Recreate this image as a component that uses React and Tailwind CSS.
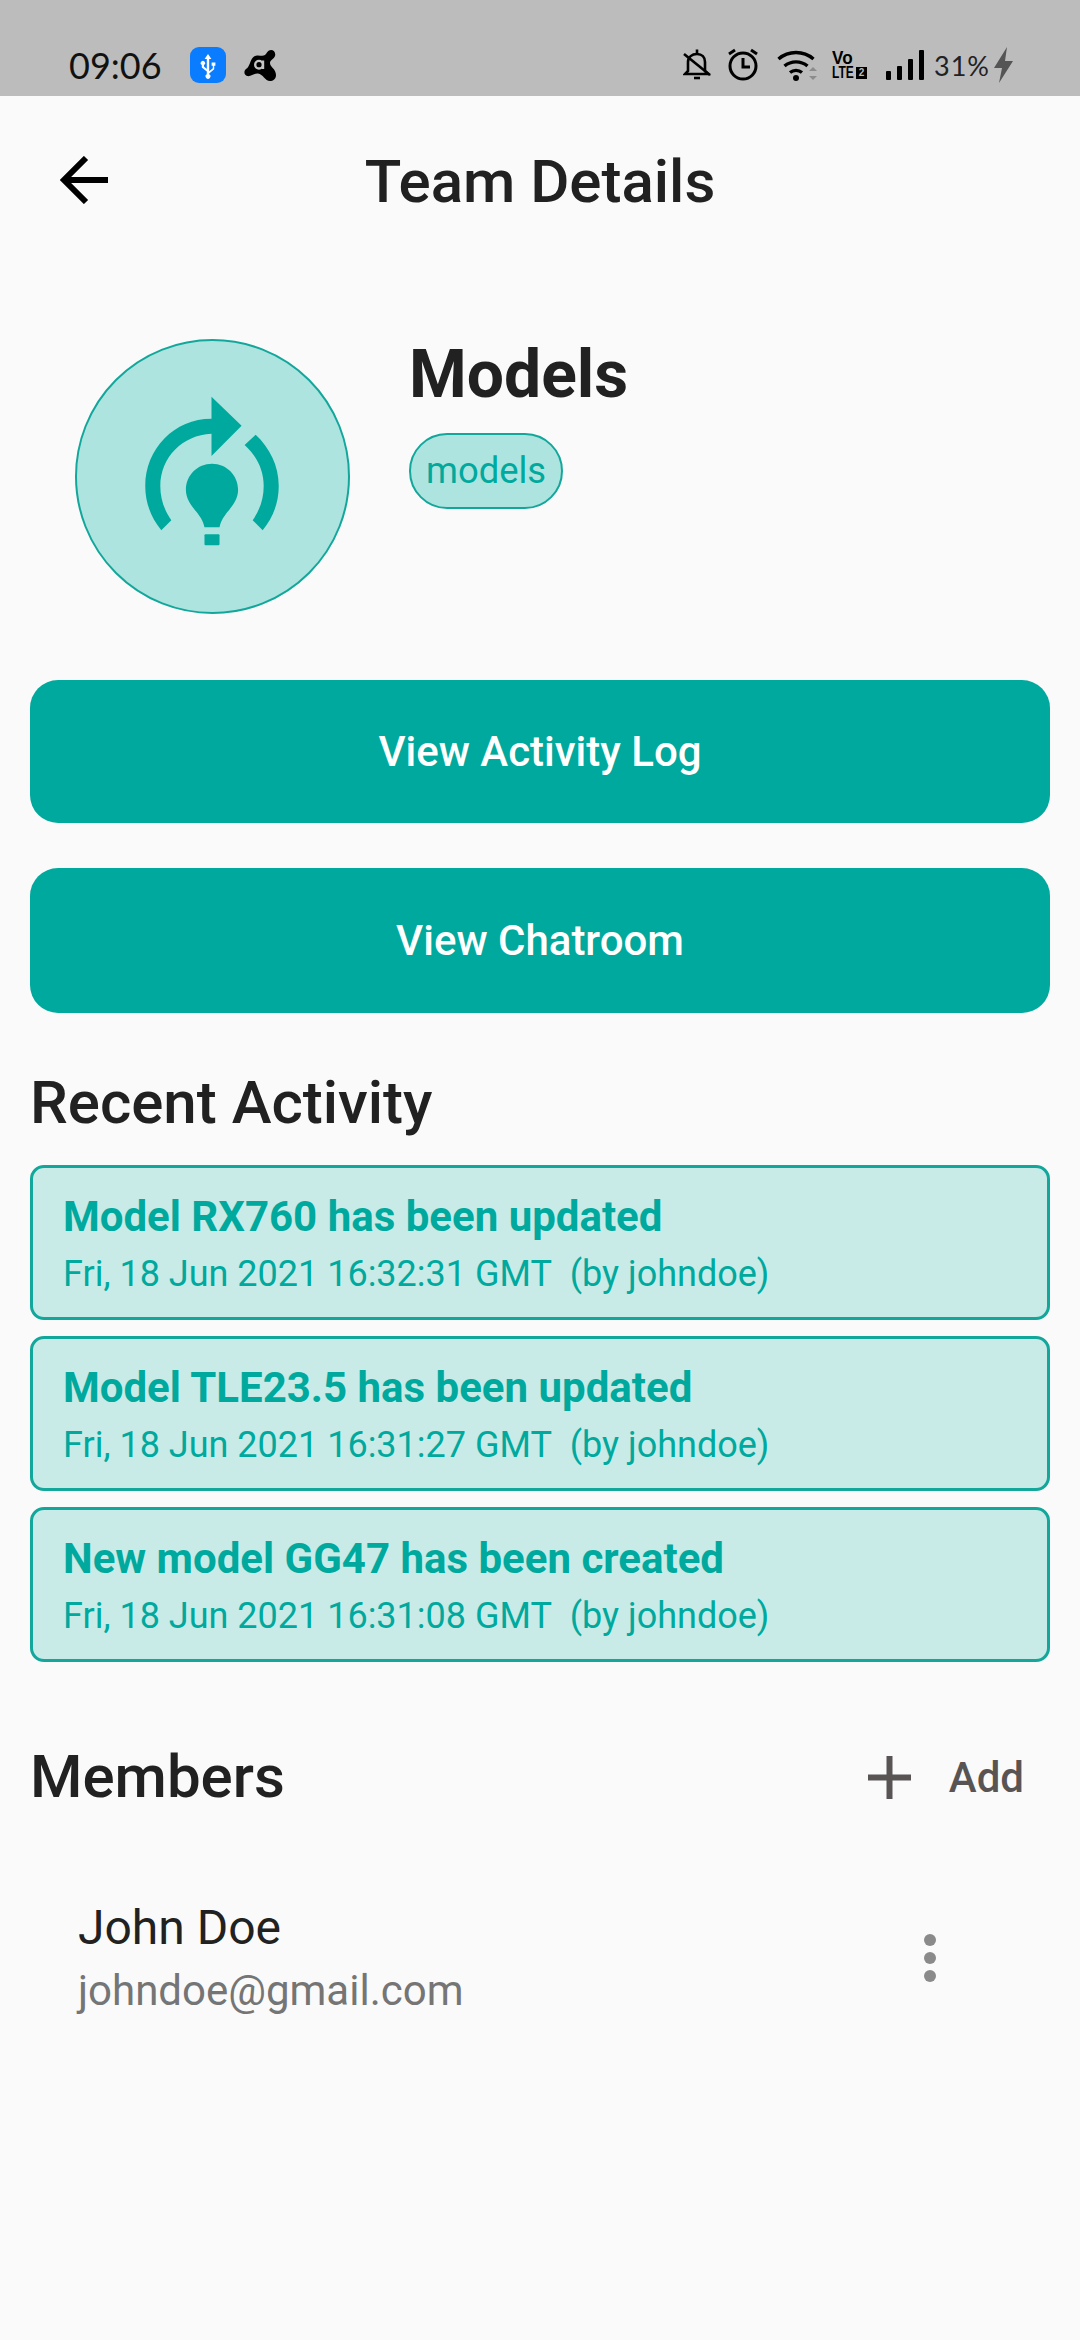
import React from 'react';

const activity = [
  { title: 'Model RX760 has been updated', date: 'Fri, 18 Jun 2021 16:32:31 GMT' },
  { title: 'Model TLE23.5 has been updated', date: 'Fri, 18 Jun 2021 16:31:27 GMT' },
  { title: 'New model GG47 has been created', date: 'Fri, 18 Jun 2021 16:31:08 GMT' },
];

function UsbBadge() {
  return (
    <span className="flex size-[36px] items-center justify-center rounded-[9px] bg-[#0a7cff]">
      <svg viewBox="0 0 36 36" className="size-[36px]" fill="#fff">
        <path d="M18 7l3.400 5h-2.200v12.200l3.600-3v-2.400h-1.200v-3.400h3.800v3.400h-1.200v3.400l-5 4.200v.9a2.400 2.400 0 1 1-2.400 0v-2.700l-5-4.200v-2.400a2.200 2.200 0 1 1 2.200 0v1.500l2.800 2.400V12h-2.200z" />
      </svg>
    </span>
  );
}

function AvastLogo() {
  return (
    <svg viewBox="0 0 32 33" className="h-[33px] w-[32px]">
      <path
        d="M27 1C30 1 32 4 31 7C30 10 26 11 26 14C26 18 32 20 32 26C32 30 29 32 26 32C21 32 19 25 14 24.500C10 24 7 28 3 27C0 26-.5 22 2 20C6 18 6 10 10 7.500C14 5 18 8 21 6C23 4 24 1 27 1z"
        fill="#000"
      />
      <circle cx="15" cy="15.700" r="3.800" fill="none" stroke="#c4c4c4" strokeWidth="2.400" />
      <rect x="18" y="11.500" width="2.200" height="8.500" fill="#c4c4c4" />
    </svg>
  );
}

function StatusIcons() {
  return (
    <div className="flex items-center">
      {/* bell off */}
      <svg viewBox="0 0 28 34" className="h-[34px] w-[28px]" fill="none" stroke="#000" strokeWidth="2.600">
        <path d="M5 23v-9c0-5 4-8 9-8s8 3 8 8v9l3 3H2z" />
        <path d="M14 1.500v4" />
        <path d="M11 30h6" />
        <path d="M1 6l26 21" />
      </svg>
      {/* alarm */}
      <svg viewBox="0 0 32 34" className="ml-[16px] h-[34px] w-[32px]" fill="none" stroke="#000" strokeWidth="3">
        <circle cx="16" cy="18" r="13" />
        <path d="M16 10v9h7" />
        <path d="M2 6l6-4" />
        <path d="M30 6l-6-4" />
      </svg>
      {/* wifi */}
      <svg viewBox="0 0 42 34" className="ml-[18px] h-[34px] w-[42px]" fill="none">
        <path d="M1.500 11a27 27 0 0 1 35 0" stroke="#000" strokeWidth="3.400" />
        <path d="M7.500 18a18 18 0 0 1 23 0" stroke="#000" strokeWidth="3.400" />
        <path d="M13 24.500a9.500 9.500 0 0 1 12 0" stroke="#000" strokeWidth="3.400" />
        <circle cx="19" cy="30" r="3" fill="#000" />
        <path d="M32 23l4-4 4 4zM32 28l4 4 4-4z" fill="#8c8c8c" />
      </svg>
      {/* VoLTE */}
      <div className="ml-[13px] flex h-[30px] w-[36px] flex-col font-['Liberation_Sans',sans-serif] font-bold text-black">
        <span className="origin-left scale-x-[0.9] text-[19px] leading-[15px]">Vo</span>
        <span className="flex items-center">
          <span className="w-[23px] origin-left scale-x-[0.75] text-[16px] leading-[15px] whitespace-nowrap">LTE</span>
          <span className="ml-[1px] flex h-[12px] w-[11px] items-center justify-center bg-black text-[10px] leading-none text-[#bcbcbc]">2</span>
        </span>
      </div>
      {/* signal */}
      <div className="ml-[18px] flex h-[30px] items-end gap-[6px]">
        <span className="h-[9px] w-[5px] rounded-[1px] bg-black" />
        <span className="h-[14px] w-[5px] rounded-[1px] bg-black" />
        <span className="h-[21px] w-[5px] rounded-[1px] bg-black" />
        <span className="h-[30px] w-[5px] rounded-[1px] bg-black" />
      </div>
      <span className="ml-[10px] font-['Lato',sans-serif] text-[27px] leading-none font-normal tracking-[1px] text-[#222]">31%</span>
      {/* charging bolt */}
      <svg viewBox="0 0 20 36" className="ml-[4px] h-[36px] w-[20px]" fill="#555">
        <path d="M13 0L0 21h8L5 36l14-22h-8z" />
      </svg>
    </div>
  );
}

function TeamIcon() {
  return (
    <div className="flex size-[275px] shrink-0 items-center justify-center rounded-full border-2 border-[#13a79c] bg-[#aee4df]">
      <svg viewBox="0 0 270 270" className="size-[274px]" fill="#00a99d">
        <path d="M134 55l30 29-30 30V92c-29 1-51 24-51 52 0 13 4 24 11 34l-10 10c-10-12-16-27-16-44 0-37 29-67 66-67z" />
        <path d="M178 93c14 13 23 31 23 51 0 17-6 32-16 44l-10-10c7-10 11-21 11-34 0-16-7-30-19-41z" />
        <path d="M134.500 121.700c14.500 0 26 11.500 26 26 0 9-5 15-10 21.500-4 5-7 9-8.500 15.800h-15c-1.500-6.800-4.500-10.800-8.500-15.800-5-6.500-10-12.500-10-21.500 0-14.500 11.500-26 26-26z" />
        <rect x="127" y="192" width="15" height="11" rx="1" />
      </svg>
    </div>
  );
}

export default function App() {
  return (
    <div className="flex min-h-[2340px] flex-col bg-[#fafafa] font-['Roboto',sans-serif] text-[#212121]">
      <div className="flex h-[96px] items-center justify-between bg-[#bcbcbc] pt-[34px] pr-[66px] pl-[69px]">
        <div className="flex items-center">
          <span className="font-['Lato',sans-serif] text-[36px] leading-none font-normal text-[#111]">09:06</span>
          <span className="ml-[28px]"><UsbBadge /></span>
          <span className="ml-[18px]"><AvastLogo /></span>
        </div>
        <StatusIcons />
      </div>

      <header className="relative flex h-[172px] items-center justify-center">
        <svg viewBox="0 0 48 48" className="absolute top-[60px] left-[60px] size-[48px]" fill="none" stroke="#000" strokeWidth="6">
          <path d="M48 24H4" />
          <path d="M26 2L4 24l22 22" />
        </svg>
        <h1 className="text-[60px] leading-none font-medium">Team Details</h1>
      </header>

      <section className="mt-[71px] flex pl-[75px]">
        <TeamIcon />
        <div className="ml-[59px] flex flex-col items-start">
          <h2 className="text-[66px] leading-[72px] font-bold">Models</h2>
          <span className="mt-[22px] flex h-[76px] items-center rounded-full border-2 border-[#13a79c] bg-[#aee4df] px-[15px] text-[36.400px] text-[#00a99d]">
            models
          </span>
        </div>
      </section>

      <div className="mt-[66px] flex flex-col gap-[45px] px-[30px]">
        <button className="h-[143px] rounded-[28px] bg-[#00a99d] text-[42px] font-medium text-white">View Activity Log</button>
        <button className="h-[145px] rounded-[28px] bg-[#00a99d] text-[42px] font-medium text-white">View Chatroom</button>
      </div>

      <h3 className="mt-[60px] px-[30px] text-[60px] leading-[60px] font-medium">Recent Activity</h3>

      <div className="mt-[32px] flex flex-col gap-[16px] px-[30px]">
        {activity.map((item) => (
          <div key={item.title} className="h-[155px] rounded-[14px] border-[3px] border-[#13a79c] bg-[#c8ebe8] pt-[24px] pl-[30px] text-[#00a99d]">
            <div className="text-[42px] leading-[50px] font-bold">{item.title}</div>
            <div className="mt-[10px] text-[36px] leading-[44px]">
              {item.date}{'\u00a0\u00a0'}(by johndoe)
            </div>
          </div>
        ))}
      </div>

      <div className="mt-[85px] flex h-[60px] items-center justify-between pr-[56px] pl-[30px]">
        <h3 className="text-[60px] font-medium">Members</h3>
        <div className="flex items-center text-[#595454]">
          <svg viewBox="0 0 43 43" className="size-[43px]" fill="none" stroke="#595454" strokeWidth="6">
            <path d="M21.500 0v43" />
            <path d="M0 21.500h43" />
          </svg>
          <span className="ml-[38px] text-[42px] font-medium">Add</span>
        </div>
      </div>

      <div className="mt-[93px] flex items-center justify-between pr-[144px] pl-[78px]">
        <div>
          <div className="text-[48px] leading-[56px]">John Doe</div>
          <div className="mt-[10px] text-[42px] leading-[50px] text-[#757575]">johndoe@gmail.com</div>
        </div>
        <div className="flex flex-col gap-[6px]">
          <span className="size-[12px] rounded-full bg-[#8a8a8a]" />
          <span className="size-[12px] rounded-full bg-[#8a8a8a]" />
          <span className="size-[12px] rounded-full bg-[#8a8a8a]" />
        </div>
      </div>
    </div>
  );
}
